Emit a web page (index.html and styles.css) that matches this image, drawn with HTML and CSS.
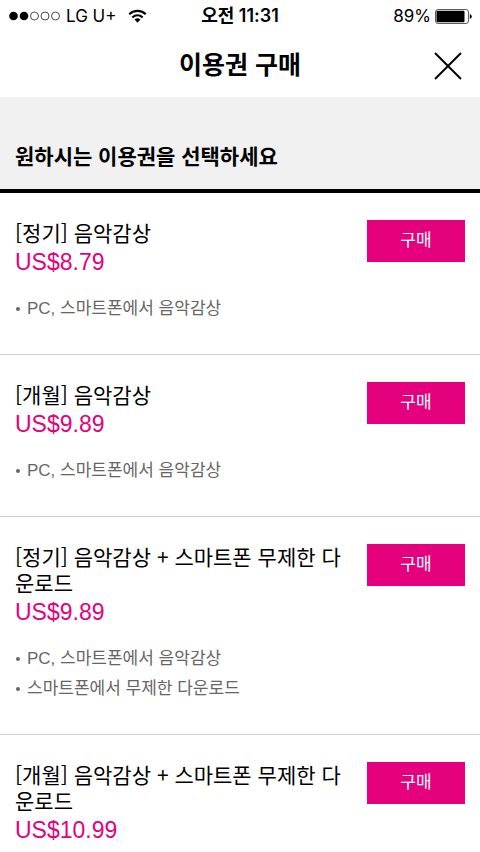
FILE: index.html
```html
<!DOCTYPE html>
<html lang="ko">
<head>
<meta charset="utf-8">
<meta name="viewport" content="width=device-width, initial-scale=1">
<title>이용권 구매</title>
<link rel="stylesheet" href="styles.css">
</head>
<body>
<div class="status">
  <div class="carrier">
    <svg class="signal" width="52" height="10" viewBox="0 0 52 10" aria-hidden="true"><circle cx="5.500" cy="5" r="4.300"/><circle cx="16" cy="5" r="4.300"/><g fill="none" stroke="#000" stroke-width=".7"><circle cx="26.500" cy="5" r="4"/><circle cx="37" cy="5" r="4"/><circle cx="47.500" cy="5" r="4"/></g></svg>
    <span>LG U+</span>
    <svg class="wifi" width="19" height="14" viewBox="0 0 20 14" aria-hidden="true"><g fill="none" stroke="#000" stroke-width="2.2"><path d="M1.300 5.200a12.400 12.400 0 0 1 17.400 0"/><path d="M4.600 8.500a7.700 7.700 0 0 1 10.800 0"/></g><path d="M10 14 6.900 10.800a4.400 4.400 0 0 1 6.200 0z"/></svg>
  </div>
  <time class="time">오전 11:31</time>
  <div class="power">
    <span>89%</span>
    <svg width="37" height="15" viewBox="0 0 37 15" aria-hidden="true"><rect x=".5" y=".5" width="33" height="14" rx="2.500" fill="none" stroke="#333" stroke-width=".8"/><rect x="1.500" y="1.800" width="28" height="11.400" rx="1"/><path d="M34.800 5v5q2-.8 2-2.500t-2-2.500"/></svg>
  </div>
</div>
<header class="header">
  <h1>이용권 구매</h1>
  <button class="close" type="button" aria-label="닫기"><svg width="28" height="28" viewBox="0 0 28 28" aria-hidden="true"><path d="M1 1 27 27M27 1 1 27" fill="none" stroke="#000" stroke-width="2"/></svg></button>
</header>
<main>
  <h2 class="guide">원하시는 이용권을 선택하세요</h2>
  <ul class="products">
    <li class="product">
      <div class="info">
        <h3>[정기] 음악감상</h3>
        <p class="price">US$8.79</p>
        <ul class="notes"><li>PC, 스마트폰에서 음악감상</li></ul>
      </div>
      <button class="buy" type="button">구매</button>
    </li>
    <li class="product">
      <div class="info">
        <h3>[개월] 음악감상</h3>
        <p class="price">US$9.89</p>
        <ul class="notes"><li>PC, 스마트폰에서 음악감상</li></ul>
      </div>
      <button class="buy" type="button">구매</button>
    </li>
    <li class="product">
      <div class="info">
        <h3>[정기] 음악감상 + 스마트폰 무제한 다운로드</h3>
        <p class="price">US$9.89</p>
        <ul class="notes"><li>PC, 스마트폰에서 음악감상</li><li>스마트폰에서 무제한 다운로드</li></ul>
      </div>
      <button class="buy" type="button">구매</button>
    </li>
    <li class="product">
      <div class="info">
        <h3>[개월] 음악감상 + 스마트폰 무제한 다운로드</h3>
        <p class="price">US$10.99</p>
      </div>
      <button class="buy" type="button">구매</button>
    </li>
  </ul>
</main>
</body>
</html>
```
FILE: styles.css
```css
* { box-sizing: border-box; }
body, h1, h2, h3, p, ul { margin: 0; padding: 0; }
ul { list-style: none; }
body {
  background: #fff;
  color: #000;
  font-family: "Liberation Sans", "Noto Sans CJK KR", sans-serif;
}
button { border: 0; padding: 0; font-family: inherit; }
svg { display: block; }
.status {
  display: grid;
  grid-template-columns: 1fr auto 1fr;
  align-items: center;
  height: 32px;
  padding: 0 8px;
  font-family: Inter, "Noto Sans CJK KR", sans-serif;
  font-size: 17px;
  line-height: 24px;
}
.carrier, .power { display: flex; align-items: center; gap: 6px; }
.wifi { margin-left: 5px; }
.power { justify-content: flex-end; gap: 4px; }
.time { font-size: 18px; font-weight: 600; }
.header {
  position: relative;
  display: flex;
  align-items: center;
  justify-content: center;
  height: 65px;
}
h1 { font-size: 25px; line-height: 36px; font-weight: 700; }
.close { position: absolute; right: 18px; top: 20px; background: none; }
.guide {
  padding: 44px 15px 16px;
  border-bottom: 4px solid #000;
  background: #f1f1f1;
  font-size: 21px;
  line-height: 32px;
  font-weight: 700;
}
.product {
  display: flex;
  align-items: flex-start;
  justify-content: space-between;
  gap: 20px;
  padding: 26px 15px 31px;
  border-bottom: 1px solid #d0d0d0;
}
.info { flex: 1; }
h3 {
  font-family: "Noto Sans CJK KR", sans-serif;
  font-size: 21px;
  line-height: 26px;
  font-weight: 400;
  word-break: break-all;
}
.price { color: #e5007d; font-size: 23px; line-height: 34px; }
.notes { display: grid; gap: 2px; margin-top: 16px; color: #666; font-size: 17px; line-height: 28px; }
.notes li { display: flex; align-items: center; gap: 7px; }
.notes li::before { content: ""; width: 4px; height: 4px; margin-left: 1px; border-radius: 50%; background: #666; }
.buy {
  width: 98px;
  height: 42px;
  margin-top: 1px;
  background: #e5007d;
  color: #fff;
  font-size: 17px;
  line-height: 24px;
}
```
